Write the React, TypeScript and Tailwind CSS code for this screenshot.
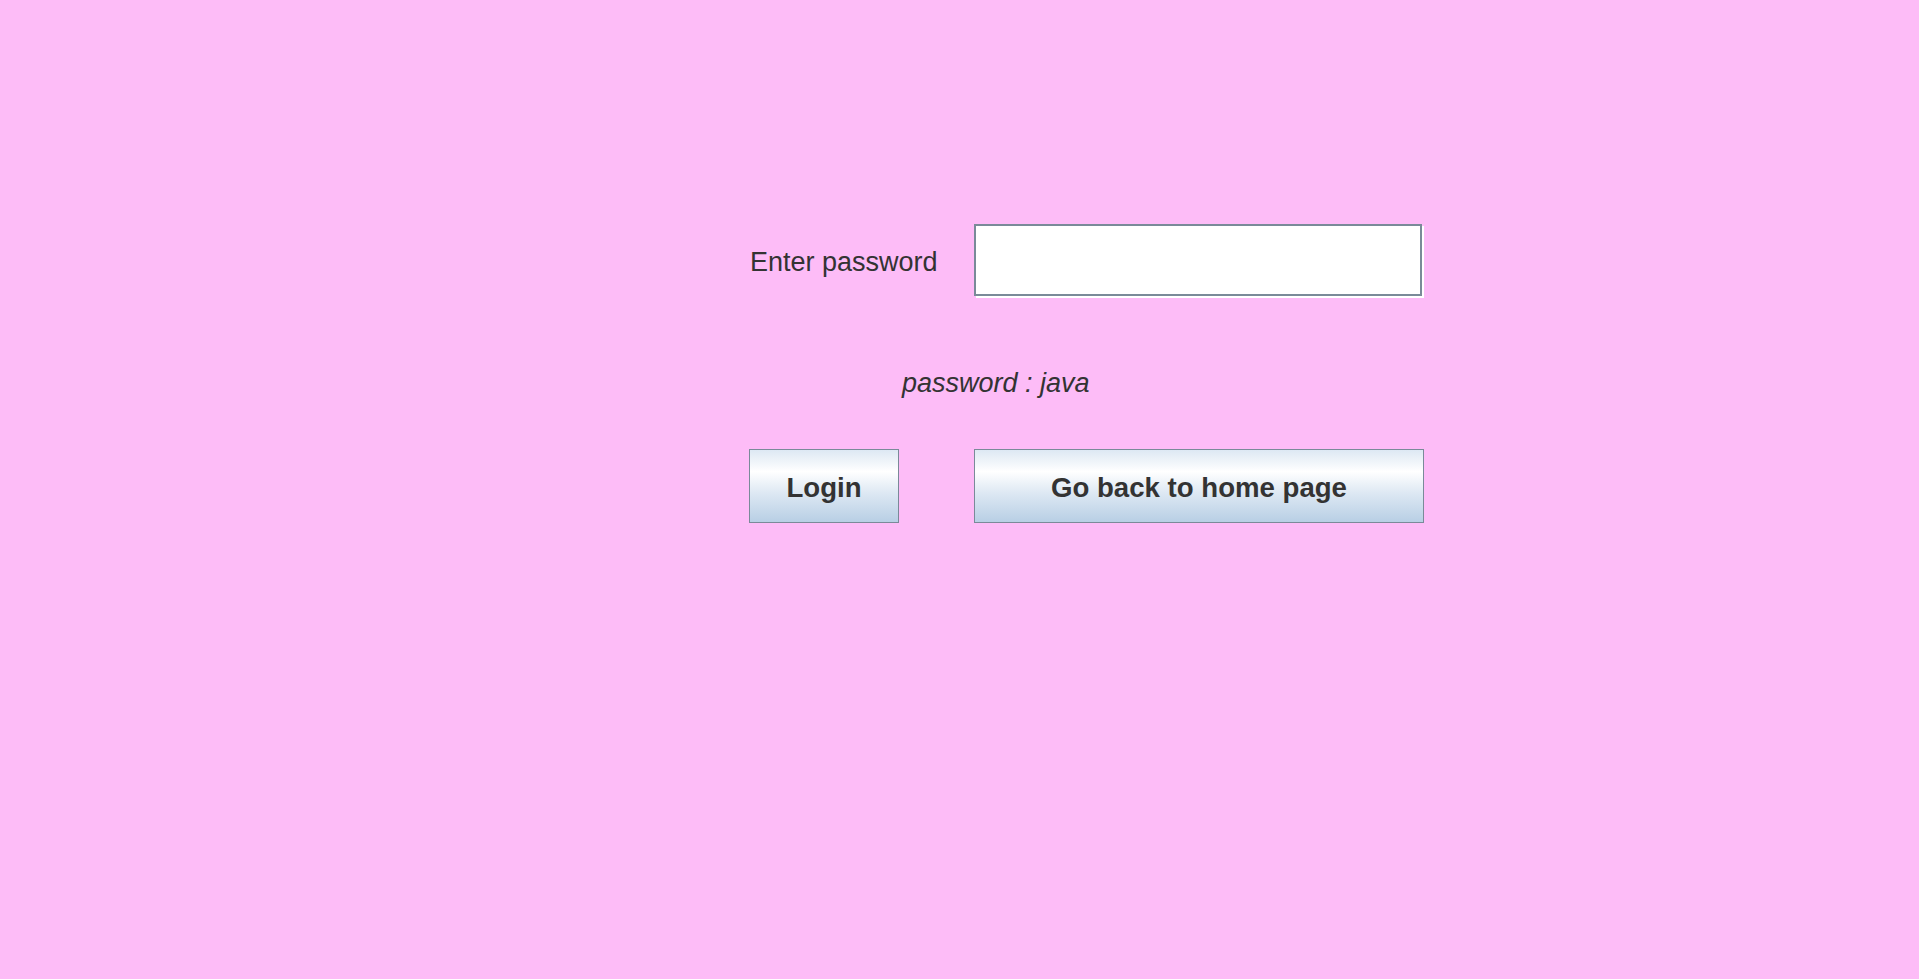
export default function App() {
  return (
    <div className="min-h-screen w-full bg-[#fdbcf7] font-['Liberation_Sans',Arial,sans-serif] text-[#333333] pt-[224px] pl-[749px]">
      {/* password row */}
      <div className="flex items-center">
        <label htmlFor="pw" className="w-[225px] pt-[2px] pl-[1px] text-[27px] leading-[31px]">
          Enter password
        </label>
        <div className="w-[450px] h-[74px]">
          <input
            id="pw"
            type="password"
            className="block w-[448px] h-[72px] bg-white border-2 border-[#7a8a99] shadow-[2px_2px_0_#ffffff] outline-none px-2 text-[27px]"
          />
        </div>
      </div>

      {/* hint */}
      <div className="mt-[70px] pl-[153px] text-[27px] leading-[31px] italic">password : java</div>

      {/* buttons */}
      <div className="mt-[50px] flex gap-[75px]">
        <button className="w-[150px] h-[74px] pt-[3px] border border-[#7a8a99] bg-[linear-gradient(to_bottom,#dde8f3_0%,#ffffff_30%,#dde8f3_60%,#b8cfe5_100%)] text-[27.6px] font-bold text-[#333333]">
          Login
        </button>
        <button className="w-[450px] h-[74px] pt-[3px] border border-[#7a8a99] bg-[linear-gradient(to_bottom,#dde8f3_0%,#ffffff_30%,#dde8f3_60%,#b8cfe5_100%)] text-[27.6px] font-bold text-[#333333]">
          Go back to home page
        </button>
      </div>
    </div>
  );
}
